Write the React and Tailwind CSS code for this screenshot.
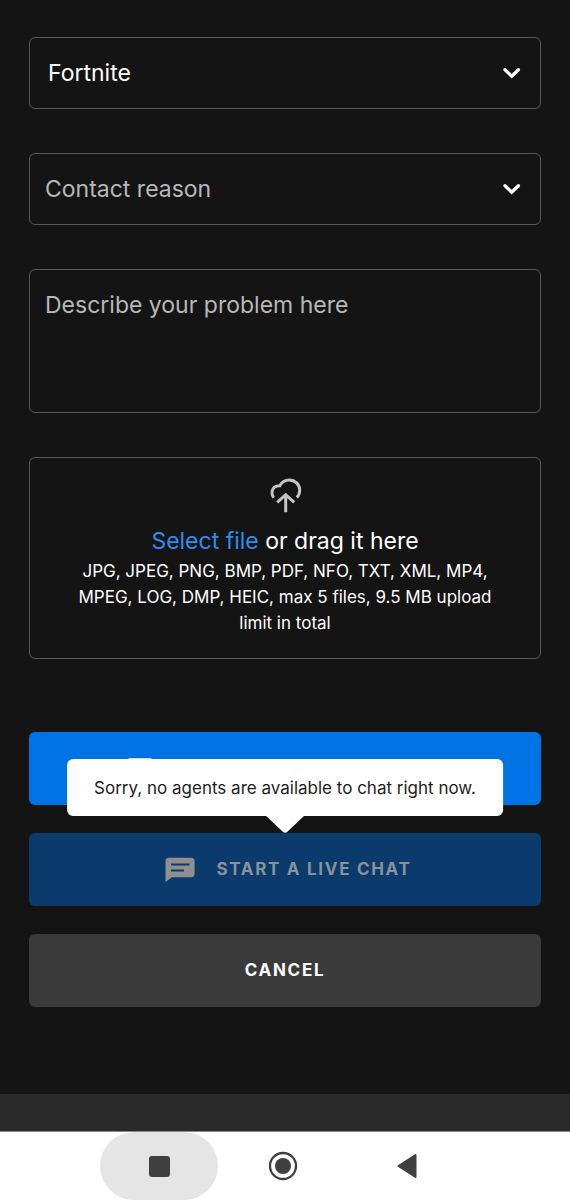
function ChevronDown() {
  return (
    <svg
      className="pointer-events-none col-start-1 row-start-1 mr-5 justify-self-end"
      width="18"
      height="12"
      viewBox="0 0 18 12"
      fill="none"
      stroke="#ffffff"
      strokeWidth="3.3"
      strokeLinecap="round"
      strokeLinejoin="miter"
      aria-hidden="true"
    >
      <path d="M2 2.7 8.7 9.2 15.4 2.7" />
    </svg>
  );
}

function SelectField({ label, className, children }) {
  return (
    <div className="grid items-center">
      <select
        aria-label={label}
        className={`col-start-1 row-start-1 h-18 w-full appearance-none rounded-md border border-[#585858] bg-[#141414] pr-12 text-[23px] outline-none ${className}`}
      >
        {children}
      </select>
      <ChevronDown />
    </div>
  );
}

function CloudUploadIcon() {
  return (
    <svg
      width="34"
      height="36"
      viewBox="-2 0 34 36"
      fill="none"
      stroke="#c4c4c4"
      strokeWidth="3"
      aria-hidden="true"
    >
      <path d="M3.6 19.8C2.2 17.6 1.7 15.6 2.1 13.3 2.8 9.8 5.8 7.6 9.8 7.7 11.8 3.9 15.2 1.9 19.2 1.9 25 1.9 29.7 6.5 29.7 12.3 29.7 15.3 28.7 17.5 26.8 19.5" />
      <path d="M7.2 24.4 15.7 16.7 24.2 24.4M15.7 16.7V34.2" />
    </svg>
  );
}

function ChatIcon() {
  return (
    <svg width="30" height="26" viewBox="0 0 30 26" aria-hidden="true">
      <path
        fill="#8f8f8f"
        d="M4 .7H26a3.6 3.6 0 0 1 3.6 3.6V16.6a3.6 3.6 0 0 1-3.6 3.6H7L.5 25V4.3A3.6 3.6 0 0 1 4 .7Z"
      />
      <path stroke="#0a3b6c" strokeWidth="2" d="M6 7.5H24.5M6 13.5H19" />
    </svg>
  );
}

function MailIcon() {
  return (
    <svg width="26" height="22" viewBox="0 0 26 22" aria-hidden="true">
      <rect x="0.5" y="0.2" width="25" height="21" rx="2" fill="#ffffff" />
      <path d="M3 5 13 12 23 5" fill="none" stroke="#0074e4" strokeWidth="2" />
    </svg>
  );
}

export default function App() {
  return (
    <div className="flex min-h-screen flex-col bg-[#141414] font-['Inter','Liberation_Sans',sans-serif] text-white">
      <main className="grow px-[29px] pt-[37px] pb-[87px]">
        <form className="flex flex-col">
          <div className="flex flex-col gap-11">
            <SelectField label="Product" className="pl-[18px] text-white">
              <option>Fortnite</option>
            </SelectField>
            <SelectField label="Contact reason" className="pl-[15px] text-[#b8b8b8]">
              <option value="">Contact reason</option>
            </SelectField>
            <textarea
              aria-label="Describe your problem here"
              placeholder="Describe your problem here"
              className="block h-36 w-full resize-none rounded-md border border-[#585858] bg-[#141414] px-[15px] py-[19px] text-[23px] leading-8 outline-none placeholder:text-[#b8b8b8]"
            />
            <div className="flex flex-col items-center rounded-md border border-[#585858] px-10 pt-5 pb-[22px] text-center">
              <CloudUploadIcon />
              <p className="mt-2.5 text-[23px] leading-[34px]">
                <button type="button" className="text-[#2f8cec]">
                  Select file
                </button>{" "}
                or drag it here
              </p>
              <p className="text-[17px] leading-[26px]">
                JPG, JPEG, PNG, BMP, PDF, NFO, TXT, XML, MP4, MPEG, LOG, DMP, HEIC, max 5 files, 9.5
                MB upload limit in total
              </p>
            </div>
          </div>

          <div className="mt-[73px] flex flex-col gap-7">
            <button
              type="submit"
              aria-label="Send email"
              className="flex h-[73px] w-full items-center rounded-md bg-[#0074e4] pl-[98px]"
            >
              <MailIcon />
            </button>
            <div className="relative">
              <button
                type="button"
                disabled
                aria-describedby="chat-status"
                className="flex h-[73px] w-full items-center justify-center gap-[21px] rounded-md bg-[#0a3b6c] pl-[7px] text-[17px] font-bold tracking-widest text-[#8a929a] uppercase"
              >
                <ChatIcon />
                Start a live chat
              </button>
              <div
                id="chat-status"
                role="tooltip"
                className="absolute bottom-full left-1/2 mb-[17px] -translate-x-1/2 rounded-md bg-white px-[27px] pt-[17px] pb-[15px] text-[17px] leading-[25px] whitespace-nowrap text-[#1c1c1c]"
              >
                Sorry, no agents are available to chat right now.
                <svg
                  className="absolute top-full left-1/2 -translate-x-1/2"
                  width="38"
                  height="18"
                  viewBox="0 0 38 18"
                  aria-hidden="true"
                >
                  <path fill="#ffffff" d="M0 0H38L21 16Q19 17.5 17 16Z" />
                </svg>
              </div>
            </div>
            <button
              type="button"
              className="h-[73px] w-full rounded-md bg-[#3a3a3a] text-[17px] font-bold tracking-widest text-white uppercase"
            >
              Cancel
            </button>
          </div>
        </form>
      </main>

      <footer className="h-[37px] bg-[#2a2a2a]" />

      <nav
        aria-label="System"
        className="flex justify-center gap-1.5 border-t border-[#8a8a8a] bg-white pr-1"
      >
        <button
          type="button"
          aria-label="Recent apps"
          className="flex h-[68px] w-[118px] items-center justify-center rounded-full bg-[#e5e5e5]"
        >
          <svg width="21" height="21" viewBox="0 0 21 21" aria-hidden="true">
            <rect width="21" height="21" rx="3" fill="#404040" />
          </svg>
        </button>
        <button
          type="button"
          aria-label="Home"
          className="flex h-[68px] w-[118px] items-center justify-center rounded-full"
        >
          <svg width="30" height="30" viewBox="0 0 30 30" aria-hidden="true">
            <circle cx="15" cy="15" r="13" fill="none" stroke="#404040" strokeWidth="2.3" />
            <circle cx="15" cy="15" r="8" fill="#404040" />
          </svg>
        </button>
        <button
          type="button"
          aria-label="Back"
          className="flex h-[68px] w-[118px] items-center justify-center rounded-full"
        >
          <svg width="20" height="26" viewBox="0 0 20 26" aria-hidden="true">
            <path
              d="M1.5 13 18.5 2V24Z"
              fill="#404040"
              stroke="#404040"
              strokeWidth="2"
              strokeLinejoin="round"
            />
          </svg>
        </button>
      </nav>
    </div>
  );
}
